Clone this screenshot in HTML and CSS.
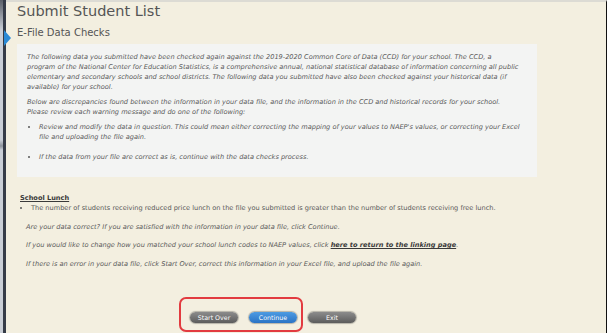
FILE: index.html
```html
<!DOCTYPE html>
<html lang="en">
<head>
    <meta charset="UTF-8">
    <title>Submit Student List</title>
    <link rel="stylesheet" href="styles.css">
</head>
<body>
    <div class="frame">
        <div class="edge"></div>
        <div class="panel">
            <h1>Submit Student List</h1>
            <div class="sub">
                <span class="pointer"></span>
                <h2>E-File Data Checks</h2>
            </div>

            <div class="notice">
                <p>The following data you submitted have been checked again against the 2019-2020 Common Core of Data (CCD) for your school. The CCD, a<br>
                program of the National Center for Education Statistics, is a comprehensive annual, national statistical database of information concerning all public<br>
                elementary and secondary schools and school districts. The following data you submitted have also been checked against your historical data (if<br>
                available) for your school.</p>
                <p>Below are discrepancies found between the information in your data file, and the information in the CCD and historical records for your school.<br>
                Please review each warning message and do one of the following:</p>
                <ul>
                    <li>Review and modify the data in question. This could mean either correcting the mapping of your values to NAEP's values, or correcting your Excel<br>
                    file and uploading the file again.</li>
                    <li class="last">If the data from your file are correct as is, continue with the data checks process.</li>
                </ul>
            </div>

            <div class="check">
                <h3>School Lunch</h3>
                <ul>
                    <li>The number of students receiving reduced price lunch on the file you submitted is greater than the number of students receiving free lunch.</li>
                </ul>
            </div>

            <p class="ask">Are your data correct? If you are satisfied with the information in your data file, click Continue.</p>
            <p class="ask">If you would like to change how you matched your school lunch codes to NAEP values, click <a href="#">here to return to the linking page</a>.</p>
            <p class="ask">If there is an error in your data file, click Start Over, correct this information in your Excel file, and upload the file again.</p>

            <div class="actions">
                <div class="ring">
                    <button class="btn grey">Start Over</button>
                    <button class="btn blue">Continue</button>
                </div>
                <button class="btn grey">Exit</button>
            </div>
        </div>
    </div>
</body>
</html>
```

FILE: styles.css
```css
html, body {
    margin: 0;
    padding: 0;
    background: #ffffff;
    font-family: "DejaVu Sans", Verdana, sans-serif;
    color: #595959;
}
.frame {
    display: flex;
    width: 607px;
    height: 333px;
}
.edge {
    width: 3px;
    background: linear-gradient(#5a5f68 0, #c9ced6 30px, #c9ced6 140px, #8d939c 146px, #c9ced6 150px, #c9ced6 333px);
    border-right: 3px solid #353b47;
}
.panel {
    flex: 1;
    background: #f3efe0;
    border-top: 2px solid #dcdbd4;
    border-right: 1px solid #111111;
    padding: 0 0 0 11px;
}
h1 {
    margin: 0;
    font-size: 14.5px;
    font-weight: normal;
    color: #555555;
    line-height: 18px;
}
.sub {
    position: relative;
    margin-top: 6px;
}
.pointer {
    position: absolute;
    left: -13px;
    top: 4px;
    width: 0;
    height: 0;
    border-top: 8px solid transparent;
    border-bottom: 8px solid transparent;
    border-left: 7px solid #2a8ad6;
}
h2 {
    margin: 0;
    font-size: 10px;
    font-weight: normal;
    color: #555555;
    line-height: 14px;
}
.notice {
    width: 500px;
    height: 117px;
    margin-top: 4px;
    padding: 8px 10px 8px 10px;
    background: #f3f4f3;
    font-size: 6.6px;
    font-style: italic;
    line-height: 10px;
    white-space: nowrap;
}
.notice p {
    margin: 0 0 5px 0;
}
.notice ul {
    margin: 4px 0 0 0;
    padding-left: 12px;
}
.notice li {
    margin-bottom: 10px;
}
.check {
    margin-top: 16px;
    padding-left: 3px;
    font-size: 6.6px;
    line-height: 10px;
}
h3 {
    margin: 0;
    font-size: 6.6px;
    font-weight: bold;
    text-decoration: underline;
    color: #3a3a3a;
    line-height: 10px;
}
.check ul {
    margin: 0;
    padding-left: 11px;
}
.ask {
    margin: 9.5px 0 0 9px;
    font-size: 6.6px;
    font-style: italic;
    line-height: 9px;
}
.ask a {
    color: #3a3a3a;
    font-weight: bold;
}
.actions {
    display: flex;
    align-items: flex-start;
    gap: 5px;
    margin: 28px 0 0 162px;
}
.ring {
    display: flex;
    gap: 11px;
    padding: 13px 4px 7px 9px;
    border: 2px solid #e23b40;
    border-radius: 7px;
}
.actions > .btn {
    margin-top: 15px;
}
.btn {
    width: 48px;
    height: 11px;
    padding: 0;
    border: none;
    border-radius: 6px;
    font-family: "DejaVu Sans", Verdana, sans-serif;
    font-size: 6.3px;
    line-height: 11px;
    color: #ffffff;
    box-shadow: 0 0 1px 1px rgba(0,0,0,0.25);
}
.grey {
    background: linear-gradient(#8c8c8c, #5c5c5c);
}
.blue {
    background: linear-gradient(#4d9be2, #2a73c5);
}
```
